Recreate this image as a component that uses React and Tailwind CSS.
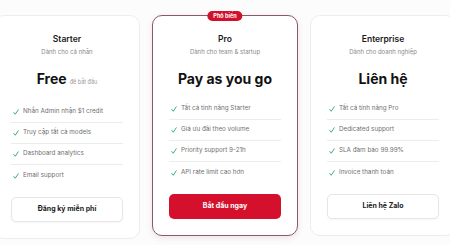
const plans = [
    {
        name: 'Starter',
        desc: 'Dành cho cá nhân',
        price: 'Free',
        note: 'để bắt đầu',
        features: ['Nhắn Admin nhận $1 credit', 'Truy cập tất cả models', 'Dashboard analytics', 'Email support'],
        cta: 'Đăng ký miễn phí',
    },
    {
        name: 'Pro',
        desc: 'Dành cho team & startup',
        price: 'Pay as you go',
        features: ['Tất cả tính năng Starter', 'Giá ưu đãi theo volume', 'Priority support 9-21h', 'API rate limit cao hơn'],
        cta: 'Bắt đầu ngay',
        popular: true,
    },
    {
        name: 'Enterprise',
        desc: 'Dành cho doanh nghiệp',
        price: 'Liên hệ',
        features: ['Tất cả tính năng Pro', 'Dedicated support', 'SLA đảm bảo 99.99%', 'Invoice thanh toán'],
        cta: 'Liên hệ Zalo',
    },
];

function Tick() {
    return (
        <svg viewBox="0 0 12 12" className="h-[6px] w-[6px] shrink-0" fill="none">
            <path d="M1.5 7 L4.5 10.5 L10.5 1.5" stroke="#2e9f7a" strokeWidth="1.8" strokeLinecap="round" strokeLinejoin="round" />
        </svg>
    );
}

function PlanCard({ plan }) {
    const { popular } = plan;
    return (
        <div
            className={`relative w-[146px] shrink-0 rounded-[10px] border bg-white px-4 pt-[17px] pb-[16px] ${
                popular ? 'border-[#8e5866] shadow-[0_2px_6px_rgba(120,40,60,0.12)]' : 'border-[#ededed]'
            }`}
        >
            {popular && (
                <div className="absolute -top-[5px] left-1/2 -translate-x-1/2 rounded-full bg-[#d2102c] px-[6px] text-[5.5px] font-bold leading-[10px] text-white whitespace-nowrap">
                    Phổ biến
                </div>
            )}
            <div className="text-center text-[8.5px] font-semibold leading-[12px] text-[#1a1a1a]">{plan.name}</div>
            <div className="mt-[2px] text-center text-[6px] leading-[10px] text-[#8a8a8a]">{plan.desc}</div>
            <div className="mt-[12px] flex items-baseline justify-center gap-[3px] leading-[20px]">
                <span className="text-[14px] font-bold text-[#111]">{plan.price}</span>
                {plan.note && <span className="text-[5.5px] text-[#999]">{plan.note}</span>}
            </div>
            <ul className="mt-[10px] divide-y divide-[#ececec]">
                {plan.features.map((f) => (
                    <li key={f} className="flex h-[21px] items-center gap-[4px] px-[2px] text-[6.3px] text-[#6f6f6f]">
                        <Tick />
                        {f}
                    </li>
                ))}
            </ul>
            <button
                className={`mt-[11px] flex h-[25px] w-full items-center justify-center rounded-[5px] text-[7px] font-bold ${
                    popular
                        ? 'bg-[#d5102d] text-white'
                        : 'border border-[#e6e6e6] bg-white text-[#1a1a1a] shadow-[0_1px_2px_rgba(0,0,0,0.04)]'
                }`}
            >
                {plan.cta}
            </button>
        </div>
    );
}

export default function App() {
    return (
        <div
            className="flex h-[245px] w-[450px] items-start justify-center gap-3 overflow-hidden bg-[#fcfcfc] pt-[15px]"
            style={{ fontFamily: 'Inter, "Noto Sans", sans-serif' }}
        >
            {plans.map((p) => (
                <PlanCard key={p.name} plan={p} />
            ))}
        </div>
    );
}
